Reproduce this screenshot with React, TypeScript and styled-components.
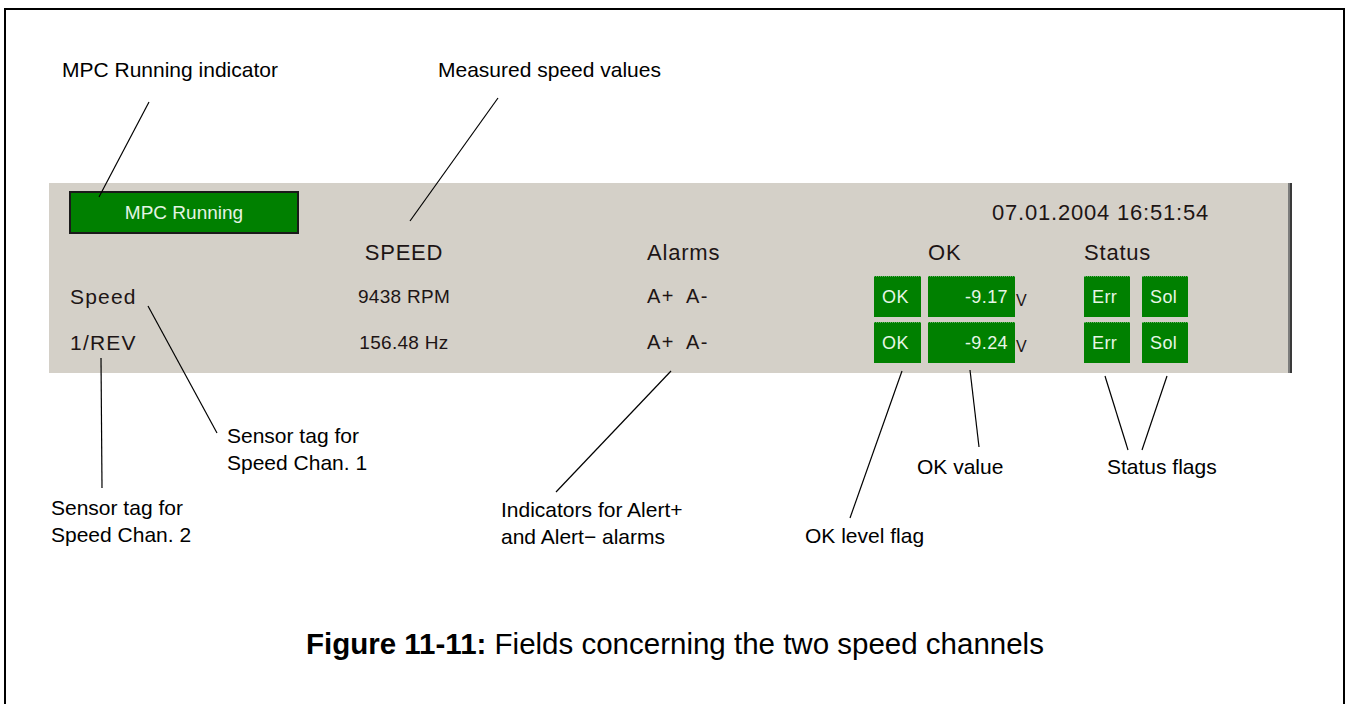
import React from 'react';
import styled, { createGlobalStyle } from 'styled-components';

const GlobalStyle = createGlobalStyle`
  html, body {
    margin: 0;
    padding: 0;
    background: #ffffff;
  }
  body {
    font-family: 'Liberation Sans', Arial, sans-serif;
    overflow: hidden;
  }
`;

const Page = styled.div`
  position: relative;
  width: 1348px;
  height: 704px;
  overflow: hidden;
  box-sizing: border-box;
  padding: 8px 0 0 4px;
`;

const Frame = styled.div`
  width: 1341px;
  height: 720px;
  box-sizing: border-box;
  border: 2px solid #000;
  border-bottom: none;
  padding: 173px 0 0 43px;
`;

const Panel = styled.div`
  width: 1243px;
  box-sizing: border-box;
  background: #d4d0c8;
  border-right: 2px solid #3a3a3a;
  box-shadow: inset -2px 0 0 #7c7c7c;
  padding: 8px 0 10px 20px;
  font-family: 'Liberation Sans', Arial, sans-serif;
  color: #1d1515;
`;

const TopBar = styled.div`
  display: flex;
  align-items: center;
  justify-content: space-between;
  height: 43px;
  padding-right: 81px;
`;

const RunningIndicator = styled.div`
  width: 230px;
  height: 43px;
  box-sizing: border-box;
  display: flex;
  align-items: center;
  justify-content: center;
  background: #008000;
  border: 2px solid #1a1a1a;
  color: #e4f4e4;
  font-size: 19px;
`;

const Clock = styled.div`
  font-size: 22px;
  letter-spacing: 0.8px;
`;

const Grid = styled.div`
  display: grid;
  grid-template-columns: 275px 120px 183px 227px 54px 156px 58px 46px;
  grid-template-rows: 37px 41px 41px;
  row-gap: 5px;
  align-items: center;
`;

const Header = styled.div<{ $col: string; $center?: boolean }>`
  grid-column: ${(p) => p.$col};
  font-size: 22px;
  letter-spacing: 0.8px;
  text-align: ${(p) => (p.$center ? 'center' : 'left')};
`;

const ChannelTag = styled.div`
  grid-column: 1;
  font-size: 21px;
  letter-spacing: 1.2px;
  padding-left: 1px;
`;

const Reading = styled.div`
  grid-column: 2;
  font-size: 19px;
  letter-spacing: 0.3px;
  text-align: center;
`;

const Alarms = styled.div`
  grid-column: 4;
  display: flex;
  gap: 11px;
  font-size: 20px;
  letter-spacing: 1.5px;
`;

const FlagBox = styled.div<{ $width: number; $right?: boolean }>`
  width: ${(p) => p.$width}px;
  height: 41px;
  box-sizing: border-box;
  display: flex;
  align-items: center;
  justify-content: ${(p) => (p.$right ? 'flex-end' : 'flex-start')};
  padding: 0 7px 0 8px;
  background: #008000;
  border-top: 1px dotted #62b062;
  color: #e6f6e6;
  font-size: 18px;
  letter-spacing: 0.4px;
`;

const ValueCell = styled.div`
  display: flex;
  align-items: center;
`;

const Unit = styled.span`
  font-size: 16px;
  margin-left: 1px;
  padding-top: 8px;
`;

const Caption = styled.div`
  margin: 256px 0 0 257px;
  font-size: 29.5px;
  line-height: 29px;
  color: #000;
  white-space: nowrap;

  b {
    font-weight: 700;
  }
`;

const Callout = styled.div<{ $x: number; $y: number }>`
  position: absolute;
  left: ${(p) => p.$x}px;
  top: ${(p) => p.$y}px;
  font-size: 21px;
  line-height: 27px;
  color: #000;
  white-space: nowrap;
`;

const Leaders = styled.svg`
  position: absolute;
  left: 0;
  top: 0;
  pointer-events: none;
`;

const channels = [
  { tag: 'Speed', reading: '9438 RPM', ok: '-9.17' },
  { tag: '1/REV', reading: '156.48 Hz', ok: '-9.24' },
];

const callouts = [
  { x: 62, y: 56, lines: ['MPC Running indicator'] },
  { x: 438, y: 56, lines: ['Measured speed values'] },
  { x: 227, y: 422, lines: ['Sensor tag for', 'Speed Chan. 1'] },
  { x: 51, y: 494, lines: ['Sensor tag for', 'Speed Chan. 2'] },
  { x: 501, y: 496, lines: ['Indicators for Alert+', 'and Alert\u2212 alarms'] },
  { x: 805, y: 522, lines: ['OK level flag'] },
  { x: 917, y: 453, lines: ['OK value'] },
  { x: 1107, y: 453, lines: ['Status flags'] },
];

const leaders = [
  [149, 102, 99, 197],
  [498, 98, 410, 221],
  [148, 306, 217, 433],
  [101, 358, 102, 488],
  [671, 371, 556, 492],
  [902, 371, 850, 518],
  [970, 370, 979, 447],
  [1105, 376, 1128, 450],
  [1167, 376, 1142, 450],
];

export default function App() {
  return (
    <>
      <GlobalStyle />
      <Page>
        <Frame>
          <Panel>
            <TopBar>
              <RunningIndicator>MPC Running</RunningIndicator>
              <Clock>07.01.2004 16:51:54</Clock>
            </TopBar>
            <Grid>
              <Header $col="2" $center>
                SPEED
              </Header>
              <Header $col="4">Alarms</Header>
              <Header $col="6">OK</Header>
              <Header $col="7 / span 2">Status</Header>

              {channels.map((ch) => (
                <React.Fragment key={ch.tag}>
                  <ChannelTag>{ch.tag}</ChannelTag>
                  <Reading>{ch.reading}</Reading>
                  <Alarms>
                    <span>A+</span>
                    <span>A-</span>
                  </Alarms>
                  <FlagBox $width={47}>OK</FlagBox>
                  <ValueCell>
                    <FlagBox $width={87} $right>
                      {ch.ok}
                    </FlagBox>
                    <Unit>V</Unit>
                  </ValueCell>
                  <FlagBox $width={46}>Err</FlagBox>
                  <FlagBox $width={46}>Sol</FlagBox>
                </React.Fragment>
              ))}
            </Grid>
          </Panel>
          <Caption>
            <b>Figure 11-11:</b> Fields concerning the two speed channels
          </Caption>
        </Frame>

        <Leaders width="1348" height="704" viewBox="0 0 1348 704">
          {leaders.map(([x1, y1, x2, y2], i) => (
            <line key={i} x1={x1} y1={y1} x2={x2} y2={y2} stroke="#000" strokeWidth="1.2" />
          ))}
        </Leaders>

        {callouts.map((c) => (
          <Callout key={c.lines[0] + c.x} $x={c.x} $y={c.y}>
            {c.lines.map((l) => (
              <div key={l}>{l}</div>
            ))}
          </Callout>
        ))}
      </Page>
    </>
  );
}
